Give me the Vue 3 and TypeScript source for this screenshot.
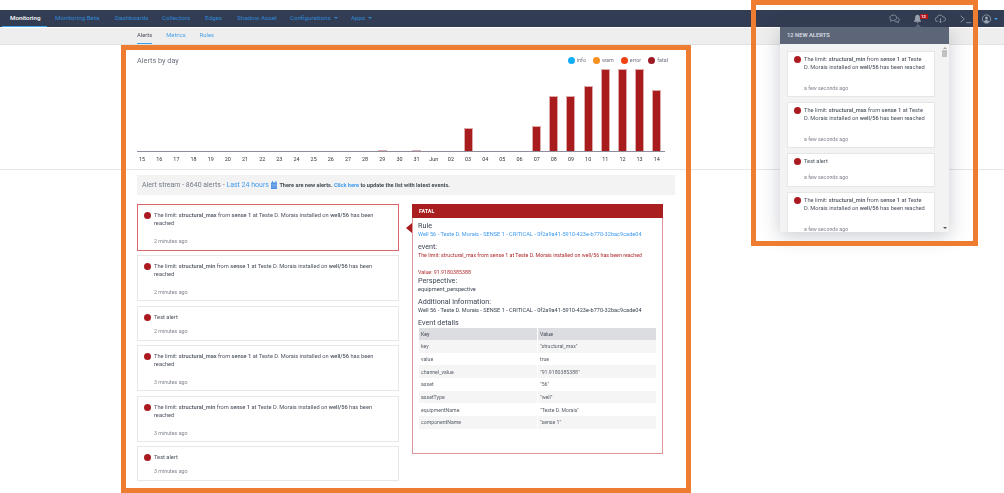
<template>
  <div class="page">
    <div class="shot">
      <div class="top-gap" />
      <nav class="navbar">
        <a
          v-for="item in navItems"
          :key="item.label"
          class="nav-item"
          :class="{ active: item.active }"
          :style="{ width: item.width + 'px' }"
        >
          {{ item.label }}<i v-if="item.caret" class="caret" />
        </a>
        <div class="nav-icons">
          <svg class="icon chat" viewBox="0 0 14 12">
            <path d="M5.5 1C3 1 1 2.5 1 4.4c0 1 .6 1.9 1.4 2.5L2 8.8l2.2-1.1c.4.1.8.1 1.3.1 2.5 0 4.4-1.5 4.4-3.4S8 1 5.5 1z" />
            <path d="M11 4.2c1.2.5 2 1.4 2 2.5 0 .9-.5 1.600-1.200 2.100l.3 1.700-1.900-1c-1.100.2-2.300 0-3.200-.6" />
          </svg>
          <span class="bell">
            <svg class="icon" viewBox="0 0 12 12">
              <path class="solid" d="M6 1C4.200 1 3.200 2.400 3.200 4.200c0 2.400-.5 3.400-1.400 4.300v.7h8.400v-.7c-.9-.9-1.400-1.900-1.400-4.300C8.800 2.400 7.800 1 6 1zM4.800 10h2.400c-.1.700-.6 1.100-1.200 1.100S4.900 10.700 4.800 10z" />
            </svg>
            <b class="badge">12</b>
          </span>
          <svg class="icon cloud" viewBox="0 0 14 12">
            <path d="M3.500 9H3a2.500 2.500 0 0 1-.3-5 3.800 3.800 0 0 1 7.300-.6A2.800 2.800 0 0 1 11 9h-.5" />
            <path d="M7 5v5.500M5.300 9 7 10.700 8.700 9" />
          </svg>
          <svg class="icon terminal" viewBox="0 0 16 12">
            <path d="M2 2l4.500 4L2 10M9 10.500h6" />
          </svg>
          <span class="user">
            <svg class="icon" viewBox="0 0 12 12">
              <circle cx="6" cy="6" r="5" />
              <circle class="solid" cx="6" cy="4.700" r="1.800" />
              <path class="solid" d="M2.800 9.300c.6-1.500 1.800-2.200 3.200-2.200s2.600.7 3.200 2.200C8.400 10.300 7.300 11 6 11s-2.400-.7-3.200-1.700z" />
            </svg>
            <i class="caret" />
          </span>
        </div>
      </nav>
      <div class="subnav">
        <a class="tab active">Alerts</a>
        <a class="tab">Metrics</a>
        <a class="tab">Rules</a>
      </div>

      <section class="chart-section">
        <div class="content">
          <div class="chart-head">
            <span class="chart-title">Alerts by day</span>
            <div class="legend">
              <span v-for="l in legend" :key="l.name" class="legend-item">
                <i :style="{ background: l.color }" />{{ l.name }}
              </span>
            </div>
          </div>
          <div class="plot">
            <div v-for="d in days" :key="d.label" class="day">
              <div class="bar-slot">
                <div v-if="d.value" class="bar" :style="{ height: d.value + 'px' }" />
              </div>
              <span class="day-label">{{ d.label }}</span>
            </div>
          </div>
        </div>
      </section>

      <section class="content stream">
        <div class="stream-bar">
          <span class="stream-title">Alert stream - 8640 alerts - <a>Last 24 hours</a></span>
          <svg class="calendar" viewBox="0 0 7 9">
            <path d="M0 1.500h7V9H0zM1.200 0h1v2h-1zM4.800 0h1v2h-1z" />
            <path class="cal-lines" d="M.6 3.500h5.800M.6 5h5.800M.6 6.500h5.800" />
          </svg>
          <span class="stream-note">There are new alerts. <a>Click here</a> to update the list with latest events.</span>
        </div>
        <div class="stream-body">
          <div class="alert-list">
            <div
              v-for="(a, i) in streamAlerts"
              :key="i"
              class="alert-card"
              :class="{ selected: i === 0, short: !a.limit }"
            >
              <i class="dot" />
              <div class="alert-text">
                <p v-if="a.limit" class="alert-msg">
                  The limit: <b>{{ a.limit }}</b> from <b>sense 1</b> at Teste D. Morais installed on <b>well/56</b> has been reached
                </p>
                <p v-else class="alert-msg">Test alert</p>
                <span class="alert-time">{{ a.time }}</span>
              </div>
            </div>
          </div>

          <div class="detail">
            <i class="detail-arrow" />
            <div class="detail-head">FATAL</div>
            <div class="detail-body">
              <h4>Rule</h4>
              <a class="mono-line">Well 56 - Teste D. Morais - SENSE 1 - CRITICAL - 0f2a9a41-5910-423e-b770-32bac9cade04</a>
              <h4 class="gap">event:</h4>
              <p class="red">The limit: structural_max from sense 1 at Teste D. Morais installed on well/56 has been reached</p>
              <p class="red value">Value: 91.9180385388</p>
              <h4>Perspective:</h4>
              <p class="mono-line">equipment_perspective</p>
              <h4 class="gap">Additional information:</h4>
              <p class="mono-line">Well 56 - Teste D. Morais - SENSE 1 - CRITICAL - 0f2a9a41-5910-423e-b770-32bac9cade04</p>
              <h4 class="gap">Event details</h4>
              <table>
                <thead>
                  <tr><th>Key</th><th>Value</th></tr>
                </thead>
                <tbody>
                  <tr v-for="r in details" :key="r[0]">
                    <td>{{ r[0] }}</td>
                    <td>{{ r[1] }}</td>
                  </tr>
                </tbody>
              </table>
            </div>
          </div>
        </div>
      </section>

      <!-- bell dropdown -->
      <div class="popup">
        <i class="popup-tip" />
        <div class="popup-head">12 NEW ALERTS</div>
        <div class="popup-body">
          <div
            v-for="(a, i) in popupAlerts"
            :key="i"
            class="popup-card"
            :class="{ short: !a.limit }"
          >
            <i class="dot" />
            <div class="alert-text">
              <p v-if="a.limit" class="alert-msg">
                The limit: <b>{{ a.limit }}</b> from <b>sense 1</b> at Teste D. Morais installed on <b>well/56</b> has been reached
              </p>
              <p v-else class="alert-msg">Test alert</p>
              <span class="alert-time">a few seconds ago</span>
            </div>
          </div>
          <div class="scrollbar">
            <i class="arrow-up" />
            <i class="thumb" />
            <i class="arrow-down" />
          </div>
        </div>
      </div>
    </div>

    <!-- annotation frames drawn over the screenshot -->
    <div class="frame frame-main" />
    <div class="frame frame-popup" />
  </div>
</template>

<script setup lang="ts">
const navItems = [
  { label: 'Monitoring', width: 45, active: true },
  { label: 'Monitoring Beta', width: 60 },
  { label: 'Dashboards', width: 47 },
  { label: 'Collectors', width: 43 },
  { label: 'Edges', width: 32 },
  { label: 'Shadow Asset', width: 53 },
  { label: 'Configurations', width: 61, caret: true },
  { label: 'Apps', width: 40, caret: true },
]

const legend = [
  { name: 'info', color: '#12aef5' },
  { name: 'warn', color: '#f5921e' },
  { name: 'error', color: '#f0420f' },
  { name: 'fatal', color: '#9c1a24' },
]

const labels = ['15', '16', '17', '18', '19', '20', '21', '22', '23', '24', '25', '26', '27', '28', '29', '30', '31', 'Jun', '02', '03', '04', '05', '06', '07', '08', '09', '10', '11', '12', '13', '14']
const values: Record<string, number> = { '29': 0.6, '31': 0.6, '03': 23, '07': 25, '08': 55, '09': 55, '10': 65, '11': 82, '12': 82, '13': 82, '14': 61 }
const days = labels.map((label) => ({ label, value: values[label] ?? 0 }))

const streamAlerts = [
  { limit: 'structural_max', time: '2 minutes ago' },
  { limit: 'structural_min', time: '2 minutes ago' },
  { limit: '', time: '2 minutes ago' },
  { limit: 'structural_max', time: '3 minutes ago' },
  { limit: 'structural_min', time: '3 minutes ago' },
  { limit: '', time: '3 minutes ago' },
]

const popupAlerts = [
  { limit: 'structural_min' },
  { limit: 'structural_max' },
  { limit: '' },
  { limit: 'structural_min' },
]

const details = [
  ['key', '"structural_max"'],
  ['value', 'true'],
  ['channel_value', '"91.9180385388"'],
  ['asset', '"56"'],
  ['assetType', '"well"'],
  ['equipmentName', '"Teste D. Morais"'],
  ['componentName', '"sense 1"'],
]
</script>

<style>
html,
body {
  margin: 0;
  background: #fff;
  overflow: hidden;
}
</style>

<style scoped>
.page {
  position: relative;
  width: 1004px;
  height: 493px;
  overflow: hidden;
  background: #fff;
}
/* the source capture is a scaled-down, soft image */
.shot {
  position: relative;
  height: 493px;
  filter: blur(0.3px);
  color: #3c4352;
  font-family: Roboto, 'Liberation Sans', sans-serif;
  font-size: 6.2px;
}
.top-gap {
  height: 10px;
}
p,
h4 {
  margin: 0;
  font-weight: 400;
}
a {
  color: #3f9bf0;
}

.navbar {
  display: flex;
  align-items: center;
  height: 17px;
  padding-left: 2px;
  background: #323c52;
  border-bottom: 1px solid #fff;
}
.nav-item {
  flex: none;
  box-sizing: border-box;
  height: 17px;
  line-height: 16px;
  padding-left: 8px;
  font-size: 6.25px;
  color: #2f88d6;
  white-space: nowrap;
}
.nav-item.active {
  color: #fff;
  font-weight: 500;
  border-bottom: 1px solid #38a3e8;
}
.caret {
  display: inline-block;
  margin-left: 3px;
  vertical-align: middle;
  border: 2px solid transparent;
  border-top-color: #2f88d6;
  border-bottom-width: 0;
}
.nav-icons {
  display: flex;
  align-items: center;
  margin-left: auto;
  padding-right: 6px;
  gap: 11px;
}
.icon {
  display: block;
  width: 11px;
  height: 10px;
  fill: none;
  stroke: #9aa2b0;
  stroke-width: 1;
}
.icon .solid {
  fill: #9aa2b0;
  stroke: none;
}
.chat {
  margin-right: 1px;
}
.terminal {
  width: 13px;
  margin: 0 -2px 0 2px;
}
.bell {
  position: relative;
  margin-right: 1px;
}
.badge {
  position: absolute;
  top: 0.5px;
  left: 7.5px;
  width: 8px;
  height: 5px;
  background: #b3161d;
  color: #fff;
  font-size: 4px;
  line-height: 5px;
  text-align: center;
}
.user {
  display: flex;
  align-items: center;
}
.user .caret {
  margin-left: 2px;
  border-top-color: #38a3e8;
}

.subnav {
  display: flex;
  gap: 14px;
  box-sizing: border-box;
  height: 17px;
  padding-left: 137px;
  background: #eeeeee;
  border-bottom: 1px solid #e2e2e2;
}
.tab {
  height: 16px;
  line-height: 15px;
  font-size: 5.8px;
  color: #4ba3ea;
}
.tab.active {
  color: #4a4f5a;
  border-bottom: 1px solid #38a3e8;
  box-sizing: border-box;
}

.content {
  width: 538px;
  margin-left: 137px;
}
.chart-section {
  box-sizing: border-box;
  height: 125px;
  border-bottom: 1px solid #e6e6e6;
}
.chart-head {
  display: flex;
  justify-content: space-between;
  height: 24px;
  padding-top: 10px;
  box-sizing: border-box;
}
.chart-title {
  font-size: 7.3px;
  line-height: 11px;
  color: #6d7380;
}
.legend {
  display: flex;
  gap: 7px;
  padding-right: 7px;
}
.legend-item {
  display: flex;
  align-items: center;
  gap: 2px;
  height: 10px;
  font-size: 5.4px;
  color: #6d7380;
}
.legend-item i {
  width: 7px;
  height: 7px;
  border-radius: 50%;
}
.plot {
  display: flex;
  margin-left: -3.5px;
  height: 94px;
}
.day {
  display: flex;
  flex-direction: column;
  align-items: center;
  flex: none;
  width: 17.17px;
}
.bar-slot {
  display: flex;
  align-items: flex-end;
  justify-content: center;
  box-sizing: border-box;
  width: 100%;
  height: 83px;
  border-bottom: 1px solid #8d8d9c;
}
.day:first-child .bar-slot {
  border-image: linear-gradient(to right, transparent 3.5px, #8d8d9c 3.5px) 1;
}
.bar {
  box-sizing: border-box;
  width: 9px;
  background: #a91c1e;
  border: 1px solid #dda9ab;
  border-bottom: 0;
}
.day-label {
  margin-top: 4px;
  font-size: 5.4px;
  line-height: 7px;
  color: #333;
}

.stream {
  padding-top: 5px;
}
.stream-bar {
  display: flex;
  align-items: center;
  height: 20px;
  padding-left: 5px;
  background: #f3f3f3;
}
.stream-title {
  font-size: 7px;
  color: #747a86;
}
.calendar {
  width: 6.5px;
  height: 8.5px;
  margin: 0 2px;
  fill: #4b90e2;
}
.cal-lines {
  stroke: #c6dcf7;
  stroke-width: 0.4;
  fill: none;
}
.stream-note {
  font-size: 5.6px;
  font-weight: 700;
  color: #444a55;
}
.stream-body {
  display: flex;
  gap: 13px;
  align-items: flex-start;
  margin-top: 9px;
}
.alert-list {
  display: flex;
  flex-direction: column;
  gap: 4.3px;
  width: 262px;
}
.alert-card,
.popup-card {
  display: flex;
  box-sizing: border-box;
  background: #fff;
  border: 1px solid #e8e8e8;
}
.alert-card {
  height: 46.5px;
  padding: 6px 12px 0 6px;
}
.alert-card.short {
  height: 35px;
}
.alert-card.selected {
  border-color: #d9686a;
}
.dot {
  flex: none;
  width: 7px;
  height: 7px;
  margin-top: 1px;
  border-radius: 50%;
  background: #aa1a1f;
}
.alert-text {
  display: flex;
  flex-direction: column;
  justify-content: space-between;
  flex: 1;
  min-width: 0;
  height: 34px;
  margin-left: 3px;
}
.short .alert-text {
  height: 22px;
}
.alert-msg {
  font-size: 5.7px;
  line-height: 8px;
  color: #4a505d;
}
.alert-msg b {
  font-weight: 500;
}
.alert-time {
  font-size: 5.3px;
  line-height: 8px;
  color: #80858f;
}

.detail {
  position: relative;
  box-sizing: border-box;
  width: 250.5px;
  height: 250px;
  border: 1px solid #dd9799;
}
.detail-arrow {
  position: absolute;
  left: -7px;
  top: 18px;
  border: 5px solid transparent;
  border-left: 0;
  border-right: 6px solid #a91c1e;
}
.detail-head {
  height: 14px;
  margin: -1px -1px 0;
  padding-left: 7px;
  background: #a91e1f;
  color: #fff;
  font-size: 5.4px;
  font-weight: 700;
  line-height: 14px;
}
.detail-body {
  padding: 3px 6px 0 5px;
}
.detail-body h4 {
  font-size: 7.2px;
  line-height: 9px;
  color: #3c4352;
}
.detail-body h4.gap {
  margin-top: 4px;
}
.mono-line {
  display: block;
  font-size: 5.6px;
  line-height: 8px;
  white-space: nowrap;
}
.red {
  font-size: 5.3px;
  line-height: 8px;
  color: #b02a2a;
  white-space: nowrap;
}
.red.value {
  margin-top: 9px;
}
table {
  width: 237px;
  margin: 1px 0 0 1px;
  border-collapse: separate;
  border-spacing: 0;
  table-layout: fixed;
  font-size: 5.2px;
  color: #5a606c;
}
th {
  box-sizing: border-box;
  height: 12px;
  padding: 0 2px;
  background: #dcdde0;
  font-weight: 400;
  text-align: left;
  color: #3c4352;
}
td {
  height: 12.7px;
  padding: 0 2px;
  box-sizing: border-box;
}
th:first-child,
td:first-child {
  width: 119px;
  border-right: 1px solid #fff;
}
tbody tr:nth-child(odd) td {
  background: #f5f5f5;
}

.popup {
  position: absolute;
  left: 780px;
  top: 27px;
  width: 169px;
  height: 205px;
  background: #f3f3f3;
  box-shadow: 0 4px 18px rgba(60, 70, 90, 0.28);
}
.popup-tip {
  position: absolute;
  left: 135px;
  top: -3px;
  border: 3px solid transparent;
  border-top: 0;
  border-bottom: 3px solid #5d6679;
}
.popup-head {
  height: 17px;
  padding-left: 7px;
  background: #5d6679;
  color: #dfe2e8;
  font-size: 5.8px;
  font-weight: 500;
  line-height: 17px;
}
.popup-body {
  position: relative;
  display: flex;
  flex-direction: column;
  gap: 5px;
  box-sizing: border-box;
  height: 188px;
  padding: 7px 0 0 7px;
  overflow: hidden;
}
.popup-card {
  flex: none;
  width: 148px;
  height: 46px;
  padding: 3px 7px 0 6px;
  border-color: #e6e6e6;
}
.popup-card.short {
  height: 34px;
}
.popup-card .alert-text {
  height: 37px;
}
.popup-card.short .alert-text {
  height: 24px;
}
.scrollbar {
  position: absolute;
  right: 1px;
  top: 1px;
  bottom: 0;
  display: flex;
  flex-direction: column;
  align-items: center;
  width: 7px;
}
.thumb {
  width: 5px;
  height: 7px;
  margin-top: 1px;
  background: #c1c1c1;
}
.arrow-up {
  margin-top: 2px;
  border: 2px solid transparent;
  border-top: 0;
  border-bottom: 2px solid #a8a8a8;
}
.arrow-down {
  margin-top: auto;
  margin-bottom: 3px;
  border: 2px solid transparent;
  border-bottom: 0;
  border-top: 2px solid #555;
}

.frame {
  position: absolute;
  box-sizing: border-box;
  border: 5px solid #ee7d31;
  pointer-events: none;
}
.frame-main {
  left: 121px;
  top: 45px;
  width: 570px;
  height: 448px;
}
.frame-popup {
  left: 751px;
  top: 0;
  width: 227px;
  height: 246px;
}
</style>
